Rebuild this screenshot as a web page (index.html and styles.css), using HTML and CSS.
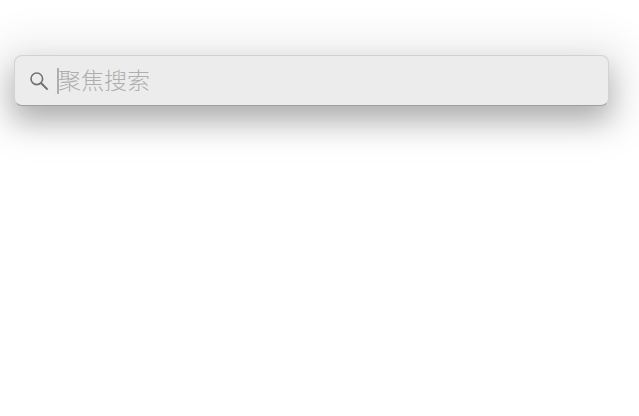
FILE: index.html
```html
<!DOCTYPE html>
<html lang="zh">

<head>
    <meta charset="UTF-8">
    <title>聚焦搜索</title>
    <link rel="stylesheet" href="styles.css">
</head>

<body>
    <!-- search bar -->
    <div class="search-bar">
        <svg class="search-icon" width="20" height="20" viewBox="0 0 20 20">
            <circle cx="7.8" cy="7.8" r="5.8" fill="none" stroke="#707070" stroke-width="1.6" />
            <path d="M12 12l6.6 6.6" fill="none" stroke="#707070" stroke-width="2" />
        </svg>
        <span class="caret"></span>
        <span class="placeholder">聚焦搜索</span>
    </div>
</body>

</html>
```

FILE: styles.css
```css
html,
body {
    height: 100%;
}

body {
    margin: 0;
    padding: 55px 30px 0 14px;
    box-sizing: border-box;
    background-color: #fff;
    overflow: hidden;
}

.search-bar {
    height: 51px;
    display: flex;
    align-items: center;
    padding-left: 14px;
    box-sizing: border-box;
    background-color: #ececec;
    border: 1px solid #d2d2d2;
    border-bottom-color: #a0a0a0;
    border-radius: 8px;
    box-shadow: 0 14px 28px 0 rgba(0, 0, 0, 0.27), 0 5px 40px 20px rgba(0, 0, 0, 0.07);
}

.search-icon {
    flex: none;
}

.caret {
    flex: none;
    width: 2px;
    height: 26px;
    margin-left: 8px;
    background-color: #aeaeae;
}

.placeholder {
    margin-left: -1px;
    margin-bottom: 3px;
    font-family: "Noto Sans CJK SC", sans-serif;
    font-size: 23px;
    font-weight: 300;
    color: #aeaeae;
    line-height: 30px;
}
```
